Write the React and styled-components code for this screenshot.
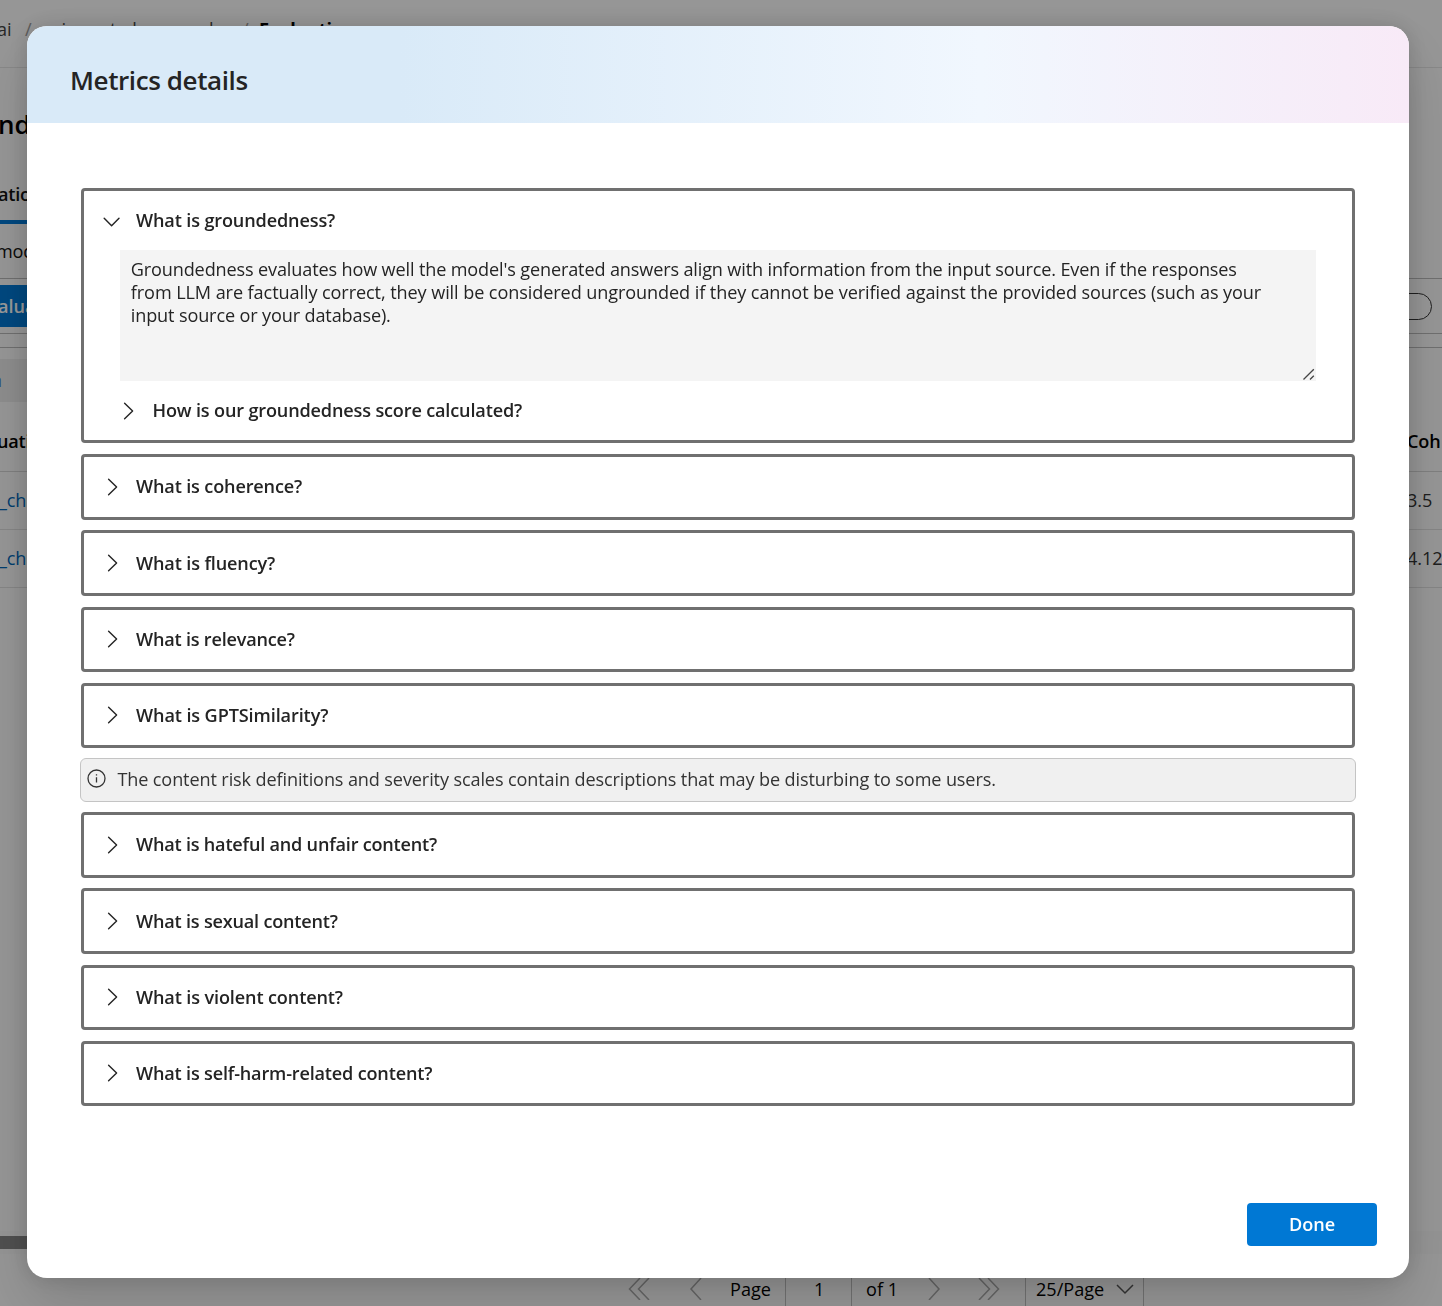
import React from "react";
import styled, { createGlobalStyle } from "styled-components";

const Global = createGlobalStyle`
  * { box-sizing: border-box; }
  html, body { margin: 0; padding: 0; overflow: hidden; background: #fff; }
  body { font-family: "Segoe UI", "Open Sans", "Noto Sans", sans-serif; color: #242424; }
`;

/* ---------- page behind the dialog ---------- */

const Page = styled.div`
  width: 1442px;
  height: 1306px;
  display: flex;
  flex-direction: column;
  overflow: hidden;
  white-space: nowrap;
  background: #fafafa;
  font-size: 18.1px;
`;

const Row = styled.div`
  flex: none;
  display: flex;
  align-items: center;
  justify-content: space-between;
  height: ${(p) => p.$h}px;
  padding-top: ${(p) => p.$top || 0}px;
  padding-bottom: ${(p) => p.$bottom || 0}px;
  border-bottom: ${(p) => (p.$rule ? `1px solid ${p.$rule}` : "0")};
`;

const Breadcrumbs = styled(Row)`
  justify-content: flex-start;
  color: #424242;
`;

const Crumb = styled.span`
  width: ${(p) => p.$w}px;
  flex: none;
  color: ${(p) => p.$color || "inherit"};
  font-weight: ${(p) => p.$weight || 400};
  text-indent: ${(p) => p.$indent || 0}px;
`;

const PageTitle = styled.span`
  font-size: 26px;
  font-weight: 600;
  color: #000;
  margin-left: -2px;
`;

const LeftText = styled.span`
  margin-left: ${(p) => p.$shift || 0}px;
  color: ${(p) => p.$color || "#111"};
  font-weight: ${(p) => p.$weight || 400};
  letter-spacing: -0.2px;
`;

const RightText = styled.span`
  width: 35px;
  letter-spacing: -0.1px;
  color: ${(p) => p.$color || "#333"};
  font-weight: ${(p) => p.$weight || 400};
`;

const TabLine = styled.div`
  flex: none;
  width: 200px;
  height: 4px;
  background: #0078d4;
`;

const BlueButton = styled.div`
  display: flex;
  align-items: center;
  width: 120px;
  height: 42px;
  background: #0078d4;
  color: #fff;
  font-weight: 600;
  text-indent: -2px;
`;

const SearchPill = styled.div`
  width: 260px;
  height: 27px;
  margin-right: 10px;
  border: 1px solid #333;
  border-radius: 14px;
`;

const Strip = styled.div`
  flex: none;
  display: flex;
  align-items: center;
  width: 300px;
  height: 43px;
  padding-bottom: 2px;
  background: #ebebeb;
`;

const Filler = styled.div`
  flex: 1;
`;

const ScrollTrack = styled.div`
  flex: none;
  display: flex;
  align-items: center;
  height: 23px;
  background: #f7f7f7;
`;

const ScrollThumb = styled.div`
  width: 900px;
  height: 13px;
  margin-top: -1px;
  background: #858585;
`;

const Pager = styled.div`
  flex: none;
  display: flex;
  height: 52px;
  padding: 18px 298px 0 0;
  justify-content: flex-end;
  color: #000;
`;

const PagerCell = styled.div`
  width: ${(p) => p.$w}px;
  height: 34px;
  display: flex;
  align-items: center;
  padding-left: ${(p) => p.$left || 0}px;
  padding-bottom: 1px;
  border-right: ${(p) => (p.$line ? "1px solid #bdbdbd" : "0")};
`;

const PagerIcon = styled.svg`
  flex: none;
  width: 24px;
  height: 22px;
  margin-left: ${(p) => p.$left || 0}px;
  fill: none;
  stroke: ${(p) => p.$color || "#a8a8a8"};
  stroke-width: 1.5;
`;

/* ---------- dialog ---------- */

const Overlay = styled.div`
  position: fixed;
  inset: 0;
  display: flex;
  align-items: flex-start;
  padding: 26px 33px 0 27px;
  background: rgba(0, 0, 0, 0.4);
`;

const Dialog = styled.div`
  display: flex;
  flex-direction: column;
  width: 1382px;
  height: 1252px;
  border-radius: 20px;
  overflow: hidden;
  background: #fff;
  box-shadow: 0 25.6px 57.6px rgba(0, 0, 0, 0.14), 0 0 22px rgba(0, 0, 0, 0.14);
`;

const DialogHeader = styled.header`
  flex: none;
  display: flex;
  align-items: center;
  height: 97px;
  padding: 10px 43px 0;
  background: linear-gradient(90deg, #d9eaf8 0%, #d9eaf8 27%, #f1f7fe 69%, #f8eaf7 100%);
`;

const Title = styled.h1`
  margin: 0;
  font-size: 26px;
  line-height: 36px;
  font-weight: 600;
  letter-spacing: -0.4px;
`;

const DialogBody = styled.main`
  flex: 1;
  display: flex;
  flex-direction: column;
  padding: 65.2px 54px 0;
`;

const Stack = styled.div`
  display: flex;
  flex-direction: column;
  gap: 10.8px;
`;

const Panel = styled.section`
  flex: none;
  display: flex;
  flex-direction: column;
  height: ${(p) => (p.$open ? 255.2 : 65.4)}px;
  border: 3px solid #707070;
  border-radius: 4px;
`;

const PanelHeader = styled.div`
  flex: none;
  display: flex;
  align-items: center;
  height: ${(p) => (p.$open ? 59 : 59.4)}px;
  padding-left: ${(p) => (p.$nested ? 33.7 : 18)}px;
`;

const Chevron = styled.svg`
  flex: none;
  width: 20px;
  height: 20px;
  margin-right: ${(p) => (p.$nested ? 14.8 : 14)}px;
  fill: none;
  stroke: #242424;
  stroke-width: 1.4;
  stroke-linecap: round;
  stroke-linejoin: round;
`;

const Question = styled.span`
  font-size: 18.1px;
  line-height: 24px;
  font-weight: 600;
  white-space: nowrap;
  letter-spacing: ${(p) => p.$ls}px;
  margin-top: -1px;
`;

const Answer = styled.div`
  flex: none;
  display: flex;
  align-items: flex-end;
  height: 130.8px;
  margin: 0 36px;
  padding: 8px 0 0 10.8px;
  background: #f4f4f4;
`;

const AnswerText = styled.div`
  align-self: flex-start;
  flex: 1;
  display: flex;
  flex-direction: column;
`;

const AnswerLine = styled.span`
  font-size: 18.1px;
  line-height: 23px;
  white-space: nowrap;
  letter-spacing: ${(p) => p.$ls}px;
`;

const Grip = styled.svg`
  flex: none;
  width: 15px;
  height: 14px;
  fill: none;
  stroke: #444;
  stroke-width: 1.3;
`;

const Notice = styled.div`
  flex: none;
  display: flex;
  align-items: center;
  height: 43.6px;
  margin: 10px -1px 10.5px;
  padding: 0 0 2px 6px;
  border: 1px solid #c4c4c4;
  border-radius: 6px;
  background: #f0f0f0;
  color: #333;
  font-size: 18.1px;
  letter-spacing: -0.122px;
  white-space: nowrap;
`;

const InfoIcon = styled.svg`
  flex: none;
  width: 19px;
  height: 19px;
  margin: -1px 11.4px 0 0;
  fill: none;
  stroke: #333;
  stroke-width: 1.3;
`;

const DialogFooter = styled.footer`
  flex: none;
  display: flex;
  justify-content: flex-end;
  padding: 0 32px 32px;
`;

const DoneButton = styled.button`
  width: 130px;
  height: 43px;
  padding: 0 0 1px;
  border: 0;
  border-radius: 4px;
  background: #0078d4;
  color: #fff;
  font-family: inherit;
  font-size: 18.1px;
  font-weight: 600;
`;

const metricQuestions = [
  ["What is coherence?", -0.15],
  ["What is fluency?", -0.14],
  ["What is relevance?", -0.21],
  ["What is GPTSimilarity?", -0.11],
];

const riskQuestions = [
  ["What is hateful and unfair content?", -0.21],
  ["What is sexual content?", -0.2],
  ["What is violent content?", -0.13],
  ["What is self-harm-related content?", -0.18],
];

const answerLines = [
  ["Groundedness evaluates how well the model's generated answers align with information from the input source. Even if the responses", -0.145],
  ["from LLM are factually correct, they will be considered ungrounded if they cannot be verified against the provided sources (such as your", -0.091],
  ["input source or your database).", -0.14],
];

function Toggle({ open, nested }) {
  return (
    <Chevron viewBox="0 0 20 20" $nested={nested}>
      <path d={open ? "M2.2 7.2 9.6 14.8 17 7.2" : "M6.6 2.2 14.6 10 6.6 17.8"} />
    </Chevron>
  );
}

function Collapsed({ items }) {
  return items.map(([text, ls]) => (
    <Panel key={text}>
      <PanelHeader>
        <Toggle />
        <Question $ls={ls}>{text}</Question>
      </PanelHeader>
    </Panel>
  ));
}

function BackgroundPage() {
  return (
    <Page>
      <Breadcrumbs $h={68} $bottom={9} $rule="#e3e3e3">
        <Crumb $w={25} $indent={-3}>ai</Crumb>
        <Crumb $w={17} $color="#999">/</Crumb>
        <Crumb $w={200}>axi-ment-alarm-panles</Crumb>
        <Crumb $w={17} $color="#999">/</Crumb>
        <Crumb $w={120} $color="#000" $weight={700}>Evaluation</Crumb>
      </Breadcrumbs>
      <Row $h={114} $bottom={2}><PageTitle>nd</PageTitle></Row>
      <Row $h={38} $bottom={14}><LeftText $shift={-2} $weight={600}>ation</LeftText></Row>
      <TabLine />
      <Row $h={55} $rule="#b9b9b9"><LeftText $shift={-4}>mod</LeftText></Row>
      <Row $h={55} $rule="#b9b9b9"><BlueButton>aluate</BlueButton><SearchPill /></Row>
      <Row $h={14} $rule="#b9b9b9" />
      <Row $h={11} />
      <Strip><LeftText $shift={-9} $color="#4f86d8">n</LeftText></Strip>
      <Row $h={70} $top={9} $rule="#d4d4d4">
        <LeftText $shift={-3} $color="#000" $weight={600}>uation</LeftText>
        <RightText $color="#000" $weight={600}>Coh</RightText>
      </Row>
      <Row $h={58} $bottom={2} $rule="#dedede">
        <LeftText $color="#0067b8" $shift={-1}>_ch</LeftText>
        <RightText>3.5</RightText>
      </Row>
      <Row $h={58} $bottom={2} $rule="#dedede">
        <LeftText $color="#0067b8" $shift={-1}>_ch</LeftText>
        <RightText>4.12</RightText>
      </Row>
      <Filler />
      <ScrollTrack><ScrollThumb /></ScrollTrack>
      <Pager>
        <PagerCell $w={60}><PagerIcon viewBox="0 0 24 22"><path d="M14 0 3.500 11 14 22M23 0 12.500 11 23 22" /></PagerIcon></PagerCell>
        <PagerCell $w={44}><PagerIcon viewBox="0 0 24 22"><path d="M15 0 5 11 15 22" /></PagerIcon></PagerCell>
        <PagerCell $w={56} $line>Page</PagerCell>
        <PagerCell $w={66} $left={28} $line>1</PagerCell>
        <PagerCell $w={70} $left={14}>of 1</PagerCell>
        <PagerCell $w={56}><PagerIcon viewBox="0 0 24 22"><path d="M7 0 17 11 7 22" /></PagerIcon></PagerCell>
        <PagerCell $w={48} $line><PagerIcon viewBox="0 0 24 22"><path d="M1 0 11.500 11 1 22M10 0 20.500 11 10 22" /></PagerIcon></PagerCell>
        <PagerCell $w={118} $left={10} $line>
          25/Page
          <PagerIcon viewBox="0 0 24 22" $color="#555" $left={10}><path d="M3 7 11 15 19 7" /></PagerIcon>
        </PagerCell>
      </Pager>
    </Page>
  );
}

export default function App() {
  return (
    <>
      <Global />
      <BackgroundPage />
      <Overlay>
        <Dialog role="dialog">
          <DialogHeader><Title>Metrics details</Title></DialogHeader>
          <DialogBody>
            <Stack>
              <Panel $open>
                <PanelHeader $open>
                  <Toggle open />
                  <Question $ls={-0.14}>What is groundedness?</Question>
                </PanelHeader>
                <Answer>
                  <AnswerText>
                    {answerLines.map(([text, ls]) => (
                      <AnswerLine key={text} $ls={ls}>{text}</AnswerLine>
                    ))}
                  </AnswerText>
                  <Grip viewBox="0 0 15 14"><path d="M2.500 12.500 12.800 2.200M9 12.500 12.800 8.700" /></Grip>
                </Answer>
                <PanelHeader $nested>
                  <Toggle nested />
                  <Question $ls={-0.16}>How is our groundedness score calculated?</Question>
                </PanelHeader>
              </Panel>
              <Collapsed items={metricQuestions} />
            </Stack>
            <Notice>
              <InfoIcon viewBox="0 0 19 19">
                <circle cx="9.500" cy="9.500" r="8.500" />
                <path d="M9.500 8.200V13.500M9.500 5.200V6.600" />
              </InfoIcon>
              The content risk definitions and severity scales contain descriptions that may be disturbing to some users.
            </Notice>
            <Stack><Collapsed items={riskQuestions} /></Stack>
          </DialogBody>
          <DialogFooter><DoneButton>Done</DoneButton></DialogFooter>
        </Dialog>
      </Overlay>
    </>
  );
}
